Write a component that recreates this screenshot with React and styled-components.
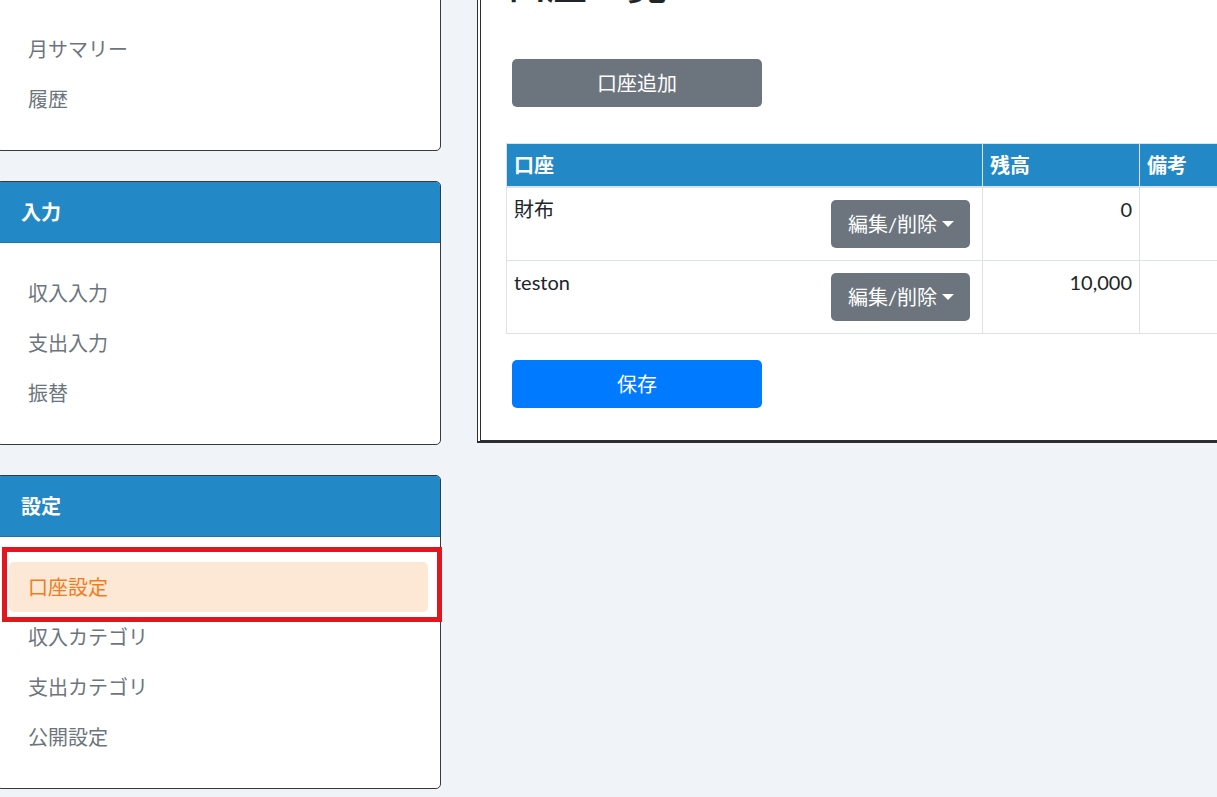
import React from "react";
import styled, { createGlobalStyle, css } from "styled-components";

const GlobalStyle = createGlobalStyle`
  html, body {
    margin: 0;
    padding: 0;
    background: #f0f4f8;
    overflow: hidden;
  }
  body {
    font-family: "Lato", "Noto Sans CJK JP", sans-serif;
    color: #212529;
  }
  * { box-sizing: border-box; }
`;

const Page = styled.div`
  display: flex;
  align-items: flex-start;
  gap: 36px;
  margin: -63px 0 0 -4px;
  width: 1700px;
`;

const Sidebar = styled.nav`
  flex: 0 0 445px;
  display: flex;
  flex-direction: column;
  gap: 30px;
`;

const Card = styled.section`
  background: #fff;
  border: 1px solid #343a40;
  border-radius: 5px;
`;

const CardHeader = styled.h2`
  margin: 0;
  padding: 15px 24px;
  background: #2389c6;
  color: #fff;
  font-size: 20px;
  line-height: 30px;
  font-weight: 700;
  border-radius: 4px 4px 0 0;
  border-bottom: 1px solid rgba(0, 0, 0, 0.15);
`;

const CardBody = styled.ul`
  list-style: none;
  margin: 0;
  padding: 25px 12px 26px;
`;

const NavItem = styled.li`
  position: relative;
  padding: 10px 19px;
  font-size: 20px;
  line-height: 30px;
  color: #6c757d;
  border-radius: 5px;
  ${(p) =>
    p.$active &&
    css`
      background: #fde8d5;
      color: #f07c1e;
    `}
`;

const Highlight = styled.span`
  position: absolute;
  top: -15px;
  left: -7px;
  right: -14px;
  bottom: -10px;
  border: 5px solid #e2161f;
  pointer-events: none;
  z-index: 2;
`;

const MainOuter = styled.main`
  flex: 0 0 1100px;
  background: #fff;
  border-top: 1px solid #2b2f33;
  border-left: 1px solid #2b2f33;
  border-bottom: 2px solid #2b2f33;
  padding-left: 2px;
`;

const MainInner = styled.div`
  border-left: 1px solid #2b2f33;
  border-bottom: 1px solid #2b2f33;
  padding: 22px 26px 32px 25px;
`;

const Title = styled.h1`
  margin: 0 0 51px 1px;
  font-size: 40px;
  line-height: 48px;
  font-weight: 500;
  color: #212529;
`;

const ActionButton = styled.button`
  display: block;
  width: 250px;
  height: 48px;
  margin: 0 0 0 6px;
  border: none;
  border-radius: 5px;
  font-family: inherit;
  font-size: 20px;
  line-height: 30px;
  color: #fff;
  background: ${(p) => (p.$variant === "primary" ? "#007bff" : "#6c757d")};
`;

const Table = styled.table`
  margin: 36px 0 26px;
  width: 900px;
  border-collapse: collapse;
  table-layout: fixed;
  font-size: 20px;
  line-height: 30px;
`;

const Th = styled.th`
  padding: 6px 7px;
  background: #2389c6;
  color: #fff;
  font-weight: 700;
  text-align: left;
  border: 1px solid #dee2e6;
  border-bottom-width: 2px;
`;

const Td = styled.td`
  padding: 6px 7px;
  vertical-align: top;
  color: #212529;
  border: 1px solid #dee2e6;
  text-align: ${(p) => (p.$align === "right" ? "right" : "left")};
`;

const NameCell = styled.div`
  display: flex;
  justify-content: space-between;
  align-items: flex-start;
`;

const DropButton = styled.button`
  display: inline-flex;
  align-items: center;
  height: 48px;
  margin: 6px 5px 6px 0;
  padding: 9px 16px 9px 17px;
  border: none;
  border-radius: 5px;
  background: #6c757d;
  color: #fff;
  font-family: inherit;
  font-size: 20px;
  line-height: 30px;
`;

const Caret = styled.span`
  display: inline-block;
  margin-left: 5px;
  border-top: 6px solid #fff;
  border-left: 6px solid transparent;
  border-right: 6px solid transparent;
`;

const menus = [
  { title: "集計", items: ["月サマリー", "履歴"] },
  { title: "入力", items: ["収入入力", "支出入力", "振替"] },
  {
    title: "設定",
    items: ["口座設定", "収入カテゴリ", "支出カテゴリ", "公開設定"],
    active: "口座設定",
  },
];

const accounts = [
  { name: "財布", balance: "0", note: "" },
  { name: "teston", balance: "10,000", note: "" },
];

export default function App() {
  return (
    <>
      <GlobalStyle />
      <Page>
        <Sidebar>
          {menus.map((m) => (
            <Card key={m.title}>
              <CardHeader>{m.title}</CardHeader>
              <CardBody>
                {m.items.map((it) => (
                  <NavItem key={it} $active={it === m.active}>
                    {it}
                    {it === m.active && <Highlight />}
                  </NavItem>
                ))}
              </CardBody>
            </Card>
          ))}
        </Sidebar>
        <MainOuter>
          <MainInner>
            <Title>口座一覧</Title>
            <ActionButton>口座追加</ActionButton>
            <Table>
              <colgroup>
                <col style={{ width: 476 }} />
                <col style={{ width: 157 }} />
                <col />
              </colgroup>
              <thead>
                <tr>
                  <Th>口座</Th>
                  <Th>残高</Th>
                  <Th>備考</Th>
                </tr>
              </thead>
              <tbody>
                {accounts.map((a) => (
                  <tr key={a.name}>
                    <Td>
                      <NameCell>
                        <span>{a.name}</span>
                        <DropButton>
                          編集/削除
                          <Caret />
                        </DropButton>
                      </NameCell>
                    </Td>
                    <Td $align="right">{a.balance}</Td>
                    <Td>{a.note}</Td>
                  </tr>
                ))}
              </tbody>
            </Table>
            <ActionButton $variant="primary">保存</ActionButton>
          </MainInner>
        </MainOuter>
      </Page>
    </>
  );
}
